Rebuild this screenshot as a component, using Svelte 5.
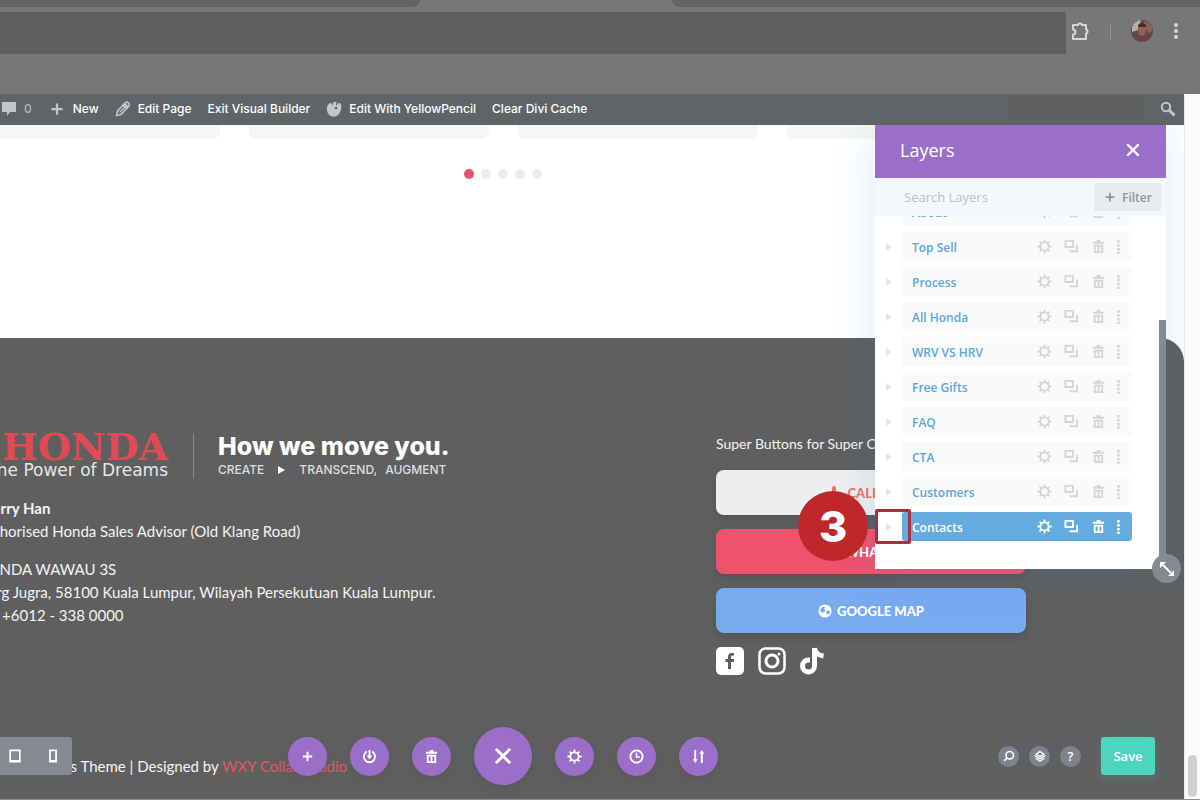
<script lang="ts">
  interface Layer {
    id: number;
    name: string;
    active?: boolean;
  }

  const layers: Layer[] = [
    { id: 1, name: 'About' },
    { id: 2, name: 'Top Sell' },
    { id: 3, name: 'Process' },
    { id: 4, name: 'All Honda' },
    { id: 5, name: 'WRV VS HRV' },
    { id: 6, name: 'Free Gifts' },
    { id: 7, name: 'FAQ' },
    { id: 8, name: 'CTA' },
    { id: 9, name: 'Customers' },
    { id: 10, name: 'Contacts', active: true },
  ];

  const tools = [
    { icon: 'plus', label: 'Load from library' },
    { icon: 'power', label: 'Save to library' },
    { icon: 'trash', label: 'Clear layout' },
    { icon: 'close', label: 'Close toolbar', big: true },
    { icon: 'gear', label: 'Page settings' },
    { icon: 'clock', label: 'Editing history' },
    { icon: 'sort', label: 'Portability' },
  ];

  const slides = [0, 1, 2, 3];
  const dots = [0, 1, 2, 3, 4];

  let query = $state('');
  let slide = $state(0);
</script>

{#snippet icon(name: string, size: number)}
  <svg width={size} height={size} viewBox="0 0 16 16" fill="none" stroke="currentColor" stroke-width="2" aria-hidden="true">
    {#if name === 'plus'}
      <path d="M8 3v10M3 8h10" />
    {:else if name === 'close'}
      <path d="M3 3l10 10M13 3L3 13" stroke-width="2.400" stroke-linecap="round" />
    {:else if name === 'power'}
      <path d="M4.5 3.2a6 6 0 1 0 7 0" stroke-linecap="round" />
      <path d="M8 1v7" />
      <path d="M5 7h6l-3 4z" fill="currentColor" stroke="none" />
    {:else if name === 'trash'}
      <path d="M6 1h4v2h4v2H2V3h4z" fill="currentColor" stroke="none" />
      <path d="M3 6h10v9H3zM5 8v5h2V8zM9 8v5h2V8z" fill="currentColor" stroke="none" fill-rule="evenodd" />
    {:else if name === 'gear'}
      <circle cx="8" cy="8" r="4.400" stroke-width="1.900" />
      <path d="M8 .5v3M8 12.500v3M.5 8h3M12.500 8h3M2.700 2.700l2.200 2.200M11.100 11.100l2.200 2.200M13.300 2.700l-2.200 2.200M4.900 11.100l-2.200 2.200" stroke-width="1.900" />
    {:else if name === 'clock'}
      <circle cx="8" cy="8" r="6.500" />
      <path d="M8 4v4.500h3.500" stroke-width="1.600" />
    {:else if name === 'sort'}
      <path d="M4.500 1v12M11.500 15V3" />
      <path d="M2 11h5l-2.500 4zM9 5h5l-2.500-4z" fill="currentColor" stroke="none" />
    {:else if name === 'copy'}
      <path d="M1.500 2h8v6.500h-8z" />
      <path d="M14 6v7H6" />
    {:else if name === 'dots'}
      <path d="M7 0h3v3H7zM7 4.500h3v3H7zM7 9h3v3H7zM7 13.500h3v2.500H7z" fill="currentColor" stroke="none" />
    {:else if name === 'zoom'}
      <circle cx="9" cy="7" r="5" />
      <path d="M5.500 10.500L1.500 14.500" />
    {:else if name === 'layers'}
      <path d="M8 2l5 3.500L8 9 3 5.500z" />
      <path d="M1 7.500L8 12l7-4.500M2 11l6 4 6-4" stroke-width="1.600" />
    {:else if name === 'tablet'}
      <path d="M2.500 1.500h11v13h-11z" />
      <path d="M2 13.500h12" />
    {:else if name === 'phone'}
      <path d="M4.500 1.500h7v13h-7z" />
      <path d="M4 13.500h8" />
    {:else if name === 'resize'}
      <path d="M4 4l8 8" />
      <path d="M1 1h6L1 7zM15 15H9l6-6z" fill="currentColor" stroke="none" />
    {:else if name === 'comment'}
      <path d="M1 1h14v10H9l-3 4v-4H1z" fill="currentColor" stroke="none" />
    {:else if name === 'pencil'}
      <path d="M1.500 14.500l1-4.500 7.500-8a2 2 0 0 1 3.500 3.500L6 13.500z" stroke-width="1.600" />
      <path d="M10 2l4 3.500-2.500 3-4-3.500z" fill="currentColor" stroke="none" />
      <path d="M4.500 11.500L10 6" stroke-width="1.400" />
    {:else if name === 'paw'}
      <path d="M1 9C0 5 3 2 5 2c1 0 1 2 1 3 1-3 2-5 4-4 1 1 0 2 0 4 2-3 3-4 5-2 1 3 0 7-2 10-3 4-11 4-12-4z" fill="currentColor" stroke="none" />
      <circle cx="10" cy="7" r="1.300" fill="#5f6467" stroke="none" />
    {:else if name === 'search'}
      <circle cx="6" cy="6" r="4.200" />
      <path d="M9 9l5.500 5.500" stroke-width="3" />
    {:else if name === 'globe'}
      <circle cx="8" cy="8" r="7.500" fill="currentColor" stroke="none" />
      <path d="M2 7l3-4h3l-1 3 2 1-2 2-2 1zM9 10l2-3 3 1-1 3-2 1z" fill="#78aaf0" stroke="none" />
    {:else if name === 'mic'}
      <path d="M6 3a2 2 0 0 1 4 0v4l3 3v5H3v-5l3-3z" fill="currentColor" stroke="none" />
    {/if}
  </svg>
{/snippet}

<div class="window">
  <!-- Browser chrome -->
  <header class="chrome">
    <div class="tabs">
      <div class="tab-left"></div>
      <div class="tab-right"></div>
    </div>
    <div class="toolbar">
      <div class="address"></div>
      <div class="chrome-actions">
        <button class="plain" aria-label="Extensions">
          <svg width="20" height="20" viewBox="0 0 20 20" fill="none" stroke="#d6d6d6" stroke-width="2">
            <path d="M3 4h5a2 1.500 0 0 1 4 0h4v4.500a1.500 2 0 0 1 0 4V18H3v-4.500a2 2 0 0 0 0-5z" stroke-linejoin="round" />
          </svg>
        </button>
        <span class="divider"></span>
        <button class="plain" aria-label="Profile">
          <svg width="22" height="22" viewBox="0 0 22 22">
            <circle cx="11" cy="11" r="11" fill="#5d4a47" />
            <path d="M1 7a11 11 0 0 1 9-7l-3 10-6 2z" fill="#b8b09c" />
            <path d="M13 1a11 11 0 0 1 9 9l-4 3-5-6z" fill="#8a6257" />
            <ellipse cx="11" cy="10" rx="4" ry="6" fill="#9a5e58" />
            <path d="M7 5q4-4 8 0v2H7z" fill="#3b2f30" />
            <path d="M3 18q8-5 16 0a11 11 0 0 1-16 0z" fill="#6f4148" />
          </svg>
        </button>
        <button class="plain" aria-label="Browser menu">
          <svg width="6" height="18" viewBox="0 0 6 18" fill="#d6d6d6">
            <circle cx="3" cy="3" r="2" /><circle cx="3" cy="9" r="2" /><circle cx="3" cy="15" r="2" />
          </svg>
        </button>
      </div>
    </div>
  </header>

  <div class="viewport">
    <div class="page">
      <!-- WordPress admin bar -->
      <nav class="admin-bar" aria-label="Admin">
        <a href="#comments" class="muted">{@render icon('comment', 16)}<span>0</span></a>
        <a href="#new">{@render icon('plus', 18)}<span>New</span></a>
        <a href="#edit">{@render icon('pencil', 16)}<span>Edit Page</span></a>
        <a href="#exit">Exit Visual Builder</a>
        <a href="#yellow">{@render icon('paw', 16)}<span>Edit With YellowPencil</span></a>
        <a href="#cache">Clear Divi Cache</a>
        <span class="account"></span>
        <button class="plain muted" aria-label="Search">{@render icon('search', 16)}</button>
      </nav>

      <main class="stage">
        <section class="slider">
          <div class="slides">
            {#each slides as s (s)}
              <div class="slide"></div>
            {/each}
          </div>
          <div class="dots">
            {#each dots as d (d)}
              <button class="dot" class:on={d === slide} aria-label="Slide {d + 1}" onclick={() => (slide = d)}></button>
            {/each}
          </div>
        </section>

        <footer class="footer">
          <div class="footer-inner">
            <div class="about">
              <div class="brand">
                <div class="brand-mark">
                  <span class="honda">HONDA</span>
                  <span class="dreams">The Power of Dreams</span>
                </div>
                <div class="brand-line">
                  <span class="move">How we move you.</span>
                  <span class="create"><span>CREATE</span><i></i><span>TRANSCEND,</span><span class="augment">AUGMENT</span></span>
                </div>
              </div>
              <p><strong>Sherry Han</strong><br />Authorised Honda Sales Advisor (Old Klang Road)</p>
              <p>HONDA WAWAU 3S<br />2 Lrg Jugra, 58100 Kuala Lumpur, Wilayah Persekutuan Kuala Lumpur.<br />Tel: +6012 - 338 0000</p>
            </div>

            <div class="contact">
              <p class="lead">Super Buttons for Super Customers</p>
              <a class="cta call" href="#call">{@render icon('mic', 16)}CALL NOW</a>
              <a class="cta chat" href="#chat">{@render icon('mic', 16)}WHATSAPP</a>
              <a class="cta map" href="#map">{@render icon('globe', 14)}GOOGLE MAP</a>
              <div class="social">
                <a href="#facebook" aria-label="Facebook">
                  <svg width="28" height="28" viewBox="0 0 28 28">
                    <rect width="28" height="28" rx="5" fill="#fff" />
                    <path d="M18 6h-2q-4 0-4 4v2H9.500v3H12v7h3v-7h3v-3h-3v-2q0-1.500 1.500-1.500H18z" fill="#5c5c5c" />
                  </svg>
                </a>
                <a href="#instagram" aria-label="Instagram">
                  <svg width="28" height="28" viewBox="0 0 28 28" fill="none" stroke="#fff" stroke-width="2.500">
                    <rect x="1.500" y="1.500" width="25" height="25" rx="6" />
                    <circle cx="14" cy="14" r="6" stroke-width="3" />
                    <circle cx="21" cy="7" r="1.500" fill="#fff" stroke="none" />
                  </svg>
                </a>
                <a href="#tiktok" aria-label="TikTok">
                  <svg width="24" height="28" viewBox="0 0 24 28" fill="none" stroke="#fff" stroke-width="5">
                    <path d="M14.500 1v18a6 6 0 1 1-6-6h1.500" />
                    <path d="M14.500 1q1 7 9 8" />
                  </svg>
                </a>
              </div>
            </div>
          </div>
          <p class="credit">Divi Wordpress Theme | Designed by <a href="#studio">WXY Collab Studio</a></p>
        </footer>

        <!-- Visual builder bar -->
        <div class="devices">
          <button class="plain" aria-label="Tablet view">{@render icon('tablet', 14)}</button>
          <button class="plain" aria-label="Phone view">{@render icon('phone', 14)}</button>
        </div>
        <div class="builder-tools">
          {#each tools as tool (tool.icon)}
            <button class="tool" class:big={tool.big} aria-label={tool.label}>{@render icon(tool.icon, tool.big ? 20 : 15)}</button>
          {/each}
        </div>
        <div class="builder-actions">
          <button class="round" aria-label="Zoom">{@render icon('zoom', 12)}</button>
          <button class="round" aria-label="Layers">{@render icon('layers', 12)}</button>
          <button class="round">?</button>
          <button class="save">Save</button>
        </div>

        <!-- Layers panel -->
        <section class="panel" aria-label="Layers">
          <header class="panel-head">
            <h2>Layers</h2>
            <button class="plain" aria-label="Close">{@render icon('close', 16)}</button>
          </header>
          <div class="panel-search">
            <input type="text" aria-label="Search Layers" placeholder="Search Layers" bind:value={query} />
            <button class="filter">{@render icon('plus', 14)}Filter</button>
          </div>
          <ul class="layer-list">
            {#each layers as layer (layer.id)}
              <li class="layer" class:active={layer.active}>
                <button class="plain expand" aria-label="Expand {layer.name}">
                  <svg width="6" height="8" viewBox="0 0 6 8" fill="currentColor"><path d="M0 0l6 4-6 4z" /></svg>
                </button>
                <div class="layer-row">
                  <span class="layer-name">{layer.name}</span>
                  <button class="plain" aria-label="Settings">{@render icon('gear', 15)}</button>
                  <button class="plain" aria-label="Duplicate">{@render icon('copy', 15)}</button>
                  <button class="plain" aria-label="Delete">{@render icon('trash', 15)}</button>
                  <button class="plain more" aria-label="More">{@render icon('dots', 14)}</button>
                </div>
                {#if layer.active}
                  <span class="mark-box"></span>
                  <span class="mark-step">3</span>
                {/if}
              </li>
            {/each}
          </ul>
          <span class="panel-thumb"></span>
          <button class="resize" aria-label="Resize panel">{@render icon('resize', 16)}</button>
        </section>
      </main>
    </div>
    <div class="scrollbar"><span></span></div>
  </div>
</div>

<style>
  :global(body) {
    background: #fff;
    font-family: Lato, 'Open Sans', sans-serif;
  }

  .window {
    min-height: 100vh;
    box-sizing: border-box;
    display: flex;
    flex-direction: column;
    overflow: hidden;
    border-bottom: 1px solid #8e8e8e;
  }
  p, h2, ul { margin: 0; padding: 0; }
  a { color: inherit; text-decoration: none; }
  svg { display: block; flex-shrink: 0; }
  button { font: inherit; color: inherit; border: 0; padding: 0; cursor: pointer; }
  .plain { background: none; display: flex; align-items: center; justify-content: center; }

  /* Browser chrome */
  .chrome { background: #777; }
  .tabs { display: flex; height: 7px; justify-content: space-between; }
  .tab-left { width: 35%; background: #646464; border-bottom-right-radius: 7px; }
  .tab-right { width: 44%; background: #646464; border-bottom-left-radius: 7px; }
  .toolbar {
    display: flex;
    padding: 5px 21px 40px 0;
    gap: 4px;
  }
  .address { flex: 1; height: 42px; background: #5f5f5f; }
  .chrome-actions {
    display: flex;
    align-items: center;
    gap: 20px;
    height: 38px;
  }
  .divider { width: 1px; height: 17px; background: #919191; }

  .viewport { flex: 1; display: flex; }
  .page { flex: 1; min-width: 0; display: flex; flex-direction: column; }
  .scrollbar {
    width: 16px;
    box-sizing: border-box;
    background: #fcfcfc;
    border-left: 1px solid #ececec;
    display: flex;
    align-items: flex-end;
    justify-content: center;
    padding-bottom: 2px;
  }
  .scrollbar span { width: 9px; height: 42px; border-radius: 5px; background: #d0d0d0; }

  /* Admin bar */
  .admin-bar {
    display: flex;
    align-items: center;
    gap: 16px;
    height: 31px;
    padding: 0 8px 2px 1px;
    box-sizing: border-box;
    background: #5f6467;
    color: #fff;
    font: 500 12px Inter, sans-serif;
    white-space: nowrap;
  }
  .admin-bar a { display: flex; align-items: center; gap: 7px; }
  .admin-bar svg { color: #c3c6c8; }
  .admin-bar .muted { color: #b4b8ba; }
  .account { width: 136px; height: 23px; margin-left: auto; background: #5f5f5f; }

  /* Slider; the canvas is scrolled sideways by 178px */
  .stage { position: relative; flex: 1; display: flex; flex-direction: column; overflow: hidden; }
  .slider { height: 213px; margin-left: -178px; }
  .slides { display: flex; gap: 29px; justify-content: center; }
  .slide { width: 240px; height: 14px; background: #f5f6f6; border-radius: 0 0 7px 7px; }
  .dots { display: flex; justify-content: center; gap: 7px; padding-top: 30px; }
  .dot { width: 10px; height: 10px; border-radius: 50%; background: #ededed; }
  .dot.on { background: #e4546b; }

  /* Footer */
  .footer {
    flex: 1;
    margin-left: -178px;
    background: #5f5f5f;
    border-top-right-radius: 24px;
    color: #f4f4f4;
    font-size: 15px;
    line-height: 23px;
  }
  .footer-inner {
    display: grid;
    grid-template-columns: 1fr 310px;
    width: 1054px;
    box-sizing: border-box;
    margin: 0 auto;
    padding: 93px 4px 0 0;
  }
  .about p { margin-bottom: 15px; }
  .brand { display: flex; height: 46px; margin: 2px 0 18px; }
  .brand-mark {
    width: 192px;
    display: flex;
    flex-direction: column;
    align-items: flex-end;
    padding-right: 25px;
    border-right: 1px solid #8b8b8b;
    white-space: nowrap;
  }
  .honda { font: bold 38px/27px 'DejaVu Serif', serif; color: #e04a55; }
  .dreams { font: 17px/20px 'DejaVu Sans', sans-serif; color: #e6e6e6; }
  .brand-line { padding-left: 24px; white-space: nowrap; }
  .move { display: block; font: 800 25px/26px Inter, sans-serif; color: #fff; }
  .create { display: flex; align-items: center; font: 500 12px/22px Inter, sans-serif; color: #dedede; }
  .create i { border: 4px solid transparent; border-left: 7px solid #fff; border-right: 0; margin: 0 14px; }
  .augment { margin-left: 8px; }

  .contact { display: flex; flex-direction: column; gap: 14px; }
  .lead { font-size: 14px; line-height: 25px; white-space: nowrap; }
  .cta {
    height: 45px;
    display: flex;
    align-items: center;
    justify-content: center;
    gap: 5px;
    border-radius: 8px;
    font: 900 13px Lato, sans-serif;
    color: #fff;
    box-shadow: 0 4px 10px rgba(0, 0, 0, 0.12);
  }
  .call { background: #eee; color: #f0705f; }
  .chat { background: #ef526d; }
  .map { background: #78aaf0; }
  .social { display: flex; gap: 14px; }
  .credit { padding: 80px 0 20px; width: 1054px; margin: 0 auto; }
  .credit a { color: #e4546b; }

  /* Builder bar */
  .devices {
    position: absolute;
    left: 0;
    bottom: 24px;
    display: flex;
    gap: 24px;
    padding: 12px 12px 12px 8px;
    background: #858a92;
    color: #fff;
    border-radius: 0 3px 3px 0;
  }
  .builder-tools {
    position: absolute;
    left: -178px;
    right: 0;
    bottom: 14px;
    display: flex;
    align-items: center;
    justify-content: center;
    gap: 23px;
    color: #fff;
  }
  .tool {
    width: 39px;
    height: 39px;
    border-radius: 50%;
    background: #9b6fc9;
    display: flex;
    align-items: center;
    justify-content: center;
    box-shadow: 0 4px 12px rgba(0, 0, 0, 0.08);
  }
  .tool.big { width: 58px; height: 58px; }
  .builder-actions {
    position: absolute;
    right: 29px;
    bottom: 24px;
    display: flex;
    align-items: center;
    gap: 10px;
    color: #fff;
    font: 600 13px 'Open Sans', sans-serif;
  }
  .round {
    width: 21px;
    height: 21px;
    border-radius: 50%;
    background: #7d828b;
    display: flex;
    align-items: center;
    justify-content: center;
  }
  .save {
    width: 54px;
    height: 38px;
    margin-left: 10px;
    border-radius: 3px;
    background: #4dd5c0;
    box-shadow: 0 3px 12px rgba(77, 213, 192, 0.2);
  }

  /* Layers panel */
  .panel {
    position: absolute;
    top: 0;
    right: 18px;
    width: 291px;
    height: 444px;
    display: flex;
    flex-direction: column;
    background: #fff;
    font-family: 'Open Sans', sans-serif;
    box-shadow: 0 5px 40px rgba(43, 135, 218, 0.16);
  }
  .panel-head {
    display: flex;
    align-items: center;
    justify-content: space-between;
    height: 53px;
    padding: 0 25px 4px;
    box-sizing: border-box;
    background: #9b6fc9;
    color: #fff;
  }
  .panel-head h2 { font-size: 18px; font-weight: 500; line-height: 24px; }
  .panel-search {
    display: flex;
    align-items: center;
    height: 38px;
    padding: 0 5px 0 29px;
    background: #f3f8fc;
  }
  .panel-search input {
    flex: 1;
    min-width: 0;
    padding: 0;
    border: 0;
    outline: 0;
    background: none;
    font: 500 13px 'Open Sans', sans-serif;
    color: #6a7784;
  }
  .panel-search input::placeholder { color: #b9c0c8; opacity: 1; }
  .filter {
    display: flex;
    align-items: center;
    justify-content: center;
    gap: 5px;
    width: 67px;
    height: 28px;
    background: #e7ecef;
    border-radius: 2px;
    color: #8f979e;
    font-size: 12px;
    font-weight: 600;
  }
  .layer-list {
    flex: 1;
    min-height: 0;
    display: flex;
    flex-direction: column;
    justify-content: flex-end;
    gap: 6px;
    padding: 0 34px 28px 0;
    list-style: none;
    clip-path: inset(0 0 0 -80px);
  }
  .layer { position: relative; display: flex; flex-shrink: 0; color: #d3d5d7; }
  .expand { width: 27px; color: #e3e5e6; }
  .layer-row {
    flex: 1;
    display: flex;
    align-items: center;
    gap: 12px;
    height: 29px;
    padding: 0 7px 0 10px;
    background: #f9fafa;
    border-radius: 3px;
  }
  .layer-name {
    flex: 1;
    padding-top: 2px;
    font-size: 12px;
    font-weight: 600;
    color: #5ba7dc;
  }
  .more { margin-left: -7px; }
  .active .layer-row { background: #64abe0; color: #fff; }
  .active .layer-name { color: #fff; }
  .panel-thumb {
    position: absolute;
    right: 0;
    bottom: 0;
    width: 7px;
    height: 249px;
    background: #858a90;
  }
  .resize {
    position: absolute;
    right: -15px;
    bottom: -14px;
    width: 29px;
    height: 29px;
    border-radius: 50%;
    background: #858a92;
    color: #fff;
    display: flex;
    align-items: center;
    justify-content: center;
  }

  /* Step marker */
  .mark-box {
    position: absolute;
    left: 0;
    top: -3px;
    width: 36px;
    height: 35px;
    box-sizing: border-box;
    border: 3px solid #a8303a;
    border-radius: 2px;
  }
  .mark-step {
    position: absolute;
    left: -77px;
    top: -21px;
    width: 70px;
    height: 70px;
    border-radius: 50%;
    background: #c0272d;
    color: #fff;
    font: 800 43px/70px Inter, sans-serif;
    text-align: center;
  }
</style>
